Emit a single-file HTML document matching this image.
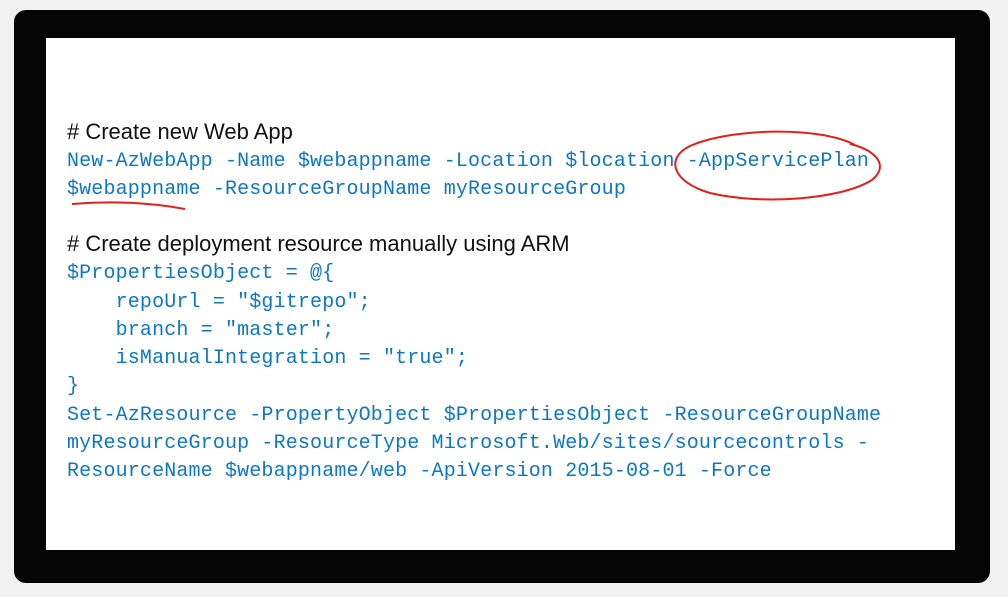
<!DOCTYPE html>
<html><head><meta charset="utf-8"><style>
html,body{margin:0;padding:0;width:1008px;height:597px;overflow:hidden;background:#f1f1f1}
.frame{position:absolute;left:14px;top:10px;width:976px;height:573px;background:#050505;border-radius:12px}
.screen{position:absolute;left:46px;top:38px;width:909px;height:512px;background:#fff}
.l{position:absolute;left:67px;white-space:pre;line-height:28px;height:28px}
.c{font-family:"Liberation Sans",sans-serif;font-size:22px;color:#111}
.k{font-family:"Liberation Mono",monospace;font-size:20px;color:#0b78c6;letter-spacing:0.15px}
</style></head><body>
<div class="frame"></div>
<div class="screen"></div>
<div class="l c" style="top:118px"># Create new Web App</div>
<div class="l k" style="top:148px">New-AzWebApp -Name $webappname -Location $location -AppServicePlan</div>
<div class="l k" style="top:176px">$webappname -ResourceGroupName myResourceGroup</div>
<div class="l c" style="top:230px"># Create deployment resource manually using ARM</div>
<div class="l k" style="top:260px">$PropertiesObject = @{</div>
<div class="l k" style="top:289px">    repoUrl = "$gitrepo";</div>
<div class="l k" style="top:317px">    branch = "master";</div>
<div class="l k" style="top:345px">    isManualIntegration = "true";</div>
<div class="l k" style="top:373px">}</div>
<div class="l k" style="top:402px">Set-AzResource -PropertyObject $PropertiesObject -ResourceGroupName</div>
<div class="l k" style="top:430px">myResourceGroup -ResourceType Microsoft.Web/sites/sourcecontrols -</div>
<div class="l k" style="top:458px">ResourceName $webappname/web -ApiVersion 2015-08-01 -Force</div>
<svg style="position:absolute;left:0;top:0" width="1008" height="597">
<path d="M72 204 Q130 199 185 209" stroke="#e0201a" stroke-width="2" fill="none"/>
<path d="M855 145 C820 126 730 128 690 146 C665 158 672 182 710 193 C760 205 840 200 872 180 C890 165 875 150 850 144" stroke="#e0201a" stroke-width="2" fill="none"/>
</svg>
</body></html>
